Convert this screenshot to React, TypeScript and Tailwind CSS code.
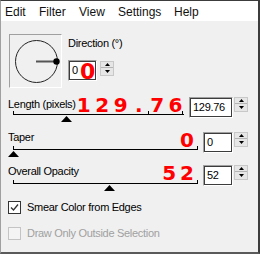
import React from "react"

type SliderProps = { width: number; thumb: number; ticks: number[] }

// track + ticks + triangle thumb, drawn like the old win32 trackbar
function Slider({ width, thumb, ticks }: SliderProps) {
  const end = width - 6
  return (
    <svg width={width} height={12} className="block overflow-visible">
      <rect x={5} y={3} width={end - 4} height={1} fill="#000" />
      {ticks.map((t) => (
        <rect key={t} x={t} y={0} width={1} height={3} fill="#000" />
      ))}
      <polygon points={`${thumb - 5},11 ${thumb + 6},11 ${thumb + 0.5},5`} fill="#000" />
    </svg>
  )
}

function Spin() {
  return (
    <div className="ml-px flex h-[15px] w-[14px] flex-col border border-[#c8c8c8] bg-[#e6e6e6]">
      <div className="flex h-[6px] items-center justify-center border-b border-[#b4b4b4]">
        <svg width="5" height="3" className="block">
          <polygon points="0,3 5,3 2.5,0" fill="#000" />
        </svg>
      </div>
      <div className="flex flex-1 items-center justify-center">
        <svg width="5" height="3" className="block">
          <polygon points="0,0 5,0 2.5,3" fill="#000" />
        </svg>
      </div>
    </div>
  )
}

function Field({ className, value, children }: { className: string; value: string; children?: React.ReactNode }) {
  return (
    <div className={"relative h-[21px] border border-t-[#a0a0a0] border-l-[#a0a0a0] border-r-white border-b-white " + className}>
      <div className="h-full border border-[#3c3c3c] bg-white pl-[2px] text-[11px] leading-[17px]">{value}</div>
      {children}
    </div>
  )
}

const red = "font-['DejaVu_Sans',sans-serif] font-bold text-[20px] leading-[20px] text-[#ff0000]"

export default function App() {
  return (
    <div className="h-[254px] w-[260px] overflow-hidden border-t border-l border-r-2 border-b-2 border-t-[#3c3c3c] border-l-[#a0a0a0] border-r-[#3c3c3c] border-b-[#5a5a5a] bg-[#f0f0f0] font-['Liberation_Sans',Arial,sans-serif] text-[11px] leading-[13px] tracking-[-0.3px] text-black">
      <div className="flex h-[20px] bg-white pl-[4px] pt-[4px] text-[12px] leading-[15px] tracking-normal text-[#111]">
        <span className="w-[34px]">Edit</span>
        <span className="w-[40px]">Filter</span>
        <span className="w-[39px]">View</span>
        <span className="w-[56px]">Settings</span>
        <span>Help</span>
      </div>

      {/* direction */}
      <div className="mt-[13px] flex pl-[8px]">
        <div className="h-[54px] w-[53px] border border-t-[#a0a0a0] border-l-[#a0a0a0] border-r-white border-b-white">
          <svg width="51" height="52" className="block">
            <circle cx="26.5" cy="26.5" r="21" fill="none" stroke="#222" strokeWidth="1" />
            <line x1="26" y1="26.5" x2="46" y2="26.5" stroke="#555" strokeWidth="2" />
            <circle cx="46.5" cy="26.5" r="3.2" fill="#000" />
          </svg>
        </div>
        <div className="ml-[6px] flex flex-col">
          <span className="mt-[3px]">Direction (°)</span>
          <div className="mt-[10px] flex items-start">
            <Field className="w-[29px]" value="0">
              <span className={"absolute top-0 left-[11px] text-[22px] leading-[22px] " + red}>0</span>
            </Field>
            <div className="mt-px ml-[2px]">
              <Spin />
            </div>
          </div>
        </div>
      </div>

      {/* length */}
      <div className="mt-[7px] flex pr-[10px] pl-[7px]">
        <div className="flex-1">
          <div className="flex h-[16px] items-start justify-between pr-[2px]">
            <span className="mt-[3px]">Length (pixels)</span>
            <span className={red + " tracking-[4.5px]"}>
              129<span className="px-[3px]">.</span>76
            </span>
          </div>
          <Slider width={181} thumb={58} ticks={[5, 140, 174]} />
        </div>
        <div className="mt-[2px] flex items-start">
          <Field className="w-[44px]" value="129.76" />
          <Spin />
        </div>
      </div>

      {/* taper */}
      <div className="mt-[7px] flex pr-[10px] pl-[7px]">
        <div className="flex-1">
          <div className="flex h-[16px] items-start justify-between pr-[6px]">
            <span className="mt-[1px]">Taper</span>
            <span className={red + " tracking-[3px]"}>0</span>
          </div>
          <Slider width={195} thumb={5} ticks={[5, 189]} />
        </div>
        <div className="mt-[2px] flex items-start">
          <Field className="w-[30px]" value="0" />
          <Spin />
        </div>
      </div>

      {/* opacity */}
      <div className="mt-[5px] flex pr-[10px] pl-[7px]">
        <div className="flex-1">
          <div className="flex h-[17px] items-start justify-between pr-[5px]">
            <span className="mt-[2px]">Overall Opacity</span>
            <span className={red + " tracking-[4px]"}>52</span>
          </div>
          <Slider width={195} thumb={101} ticks={[5, 189]} />
        </div>
        <div className="mt-[2px] flex items-start">
          <Field className="w-[30px]" value="52" />
          <Spin />
        </div>
      </div>

      {/* checkboxes */}
      <div className="mt-[9px] flex items-center pl-[7px]">
        <div className="h-[13px] w-[13px] border border-[#333] bg-white">
          <svg width="11" height="11" className="block">
            <polyline points="2,5.5 4.5,8 9,2.5" fill="none" stroke="#333" strokeWidth="1.3" />
          </svg>
        </div>
        <span className="ml-[6px]">Smear Color from Edges</span>
      </div>
      <div className="mt-[13px] flex items-center pl-[7px]">
        <div className="h-[13px] w-[13px] border border-[#c4c4c4] bg-[#f4f4f4]" />
        <span className="ml-[6px] text-[#a0a0a0]">Draw Only Outside Selection</span>
      </div>
    </div>
  )
}
